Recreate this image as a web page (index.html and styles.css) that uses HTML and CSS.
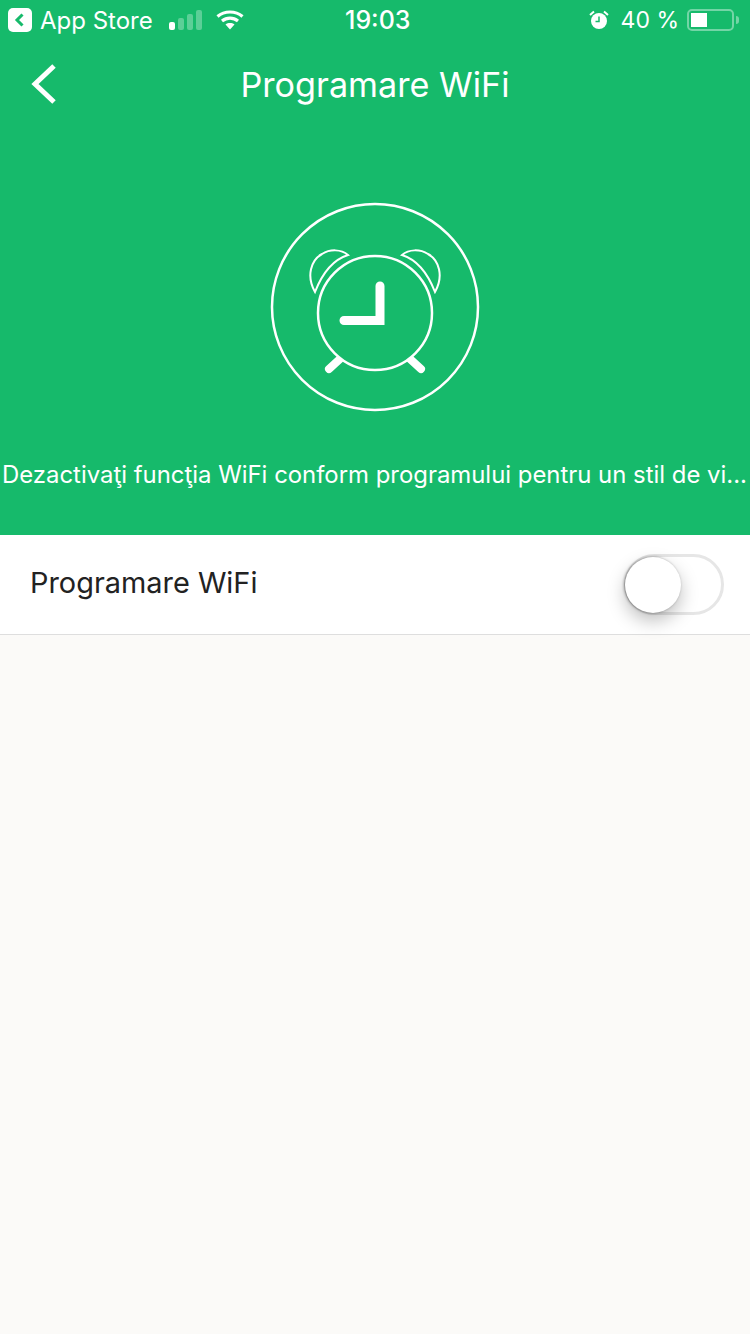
FILE: index.html
```html
<!DOCTYPE html>
<html>
<head>
  <title>Programare WiFi</title>
  <link rel="stylesheet" href="styles.css">
</head>
<body>
  <div class="header">
    <div class="status-bar">
      <div class="status-left">
        <svg class="app-back" width="24" height="24" viewBox="0 0 24 24">
          <rect width="24" height="24" rx="5" fill="#fff"/>
          <path d="M14.5 6.5 9 12l5.5 5.5" fill="none" stroke="#16BA6B" stroke-width="3"/>
        </svg>
        <span class="carrier">App Store</span>
        <div class="signal">
          <span class="bar bar-on"></span>
          <span class="bar bar-2"></span>
          <span class="bar bar-3"></span>
          <span class="bar bar-4"></span>
        </div>
        <svg class="wifi" width="28" height="20" viewBox="0 0 28 20">
          <path d="M1.5 6.5C8.5 .5 19.5 .5 26.5 6.5M6 11c4.8-3.9 11.200-3.900 16 0" fill="none" stroke="#fff" stroke-width="3.2"/>
          <path d="M9.5 14.5c2.700-1.900 6.300-1.900 9 0L14 19.500z" fill="#fff"/>
        </svg>
      </div>
      <div class="status-time">19:03</div>
      <div class="status-right">
        <svg class="alarm-small" width="20" height="20" viewBox="0 0 20 20">
          <circle cx="10" cy="11" r="8" fill="#fff"/>
          <path d="M10 6.5V11.5H6.5" fill="none" stroke="#16BA6B" stroke-width="1.5"/>
          <path d="M1 5 5 1.5M19 5 15 1.5" stroke="#fff" stroke-width="2"/>
        </svg>
        <span class="percent">40 %</span>
        <div class="battery"><div class="battery-level"></div></div>
        <div class="battery-nub"></div>
      </div>
    </div>

    <div class="nav">
      <svg class="nav-back" width="28" height="42" viewBox="0 0 28 42">
        <path d="M24 3 5 21l19 18" fill="none" stroke="#fff" stroke-width="5"/>
      </svg>
      <div class="nav-title">Programare WiFi</div>
    </div>

    <svg class="hero-icon" width="210" height="210" viewBox="0 0 210 210">
      <g fill="none" stroke="#fff">
        <circle cx="105" cy="105" r="103" stroke-width="2.5"/>
        <path d="M71 156 59 167M139 156 151 167" stroke-width="8" stroke-linecap="round"/>
        <circle cx="105" cy="111" r="57" fill="#16BA6B" stroke-width="2.5"/>
        <path d="M45 90C36 74 41 58 52 52C60 47 71 47 78 53C62 58 52 72 45 90Z" stroke-width="2"/>
        <path d="M165 90C174 74 169 58 158 52C150 47 139 47 132 53C148 58 158 72 165 90Z" stroke-width="2"/>
        <path d="M110 84V118.5H74" stroke-width="9" stroke-linecap="round"/>
      </g>
    </svg>

    <div class="hero-text">Dezactivaţi funcţia WiFi conform programului pentru un stil de vi...</div>
  </div>

  <div class="row">
    <span class="row-label">Programare WiFi</span>
    <div class="switch"><div class="knob"></div></div>
  </div>
</body>
</html>
```

FILE: styles.css
```css
body {
  margin: 0;
  height: 1334px;
  overflow: hidden;
  background: #FBFAF8;
  font-family: Inter, "Noto Sans", sans-serif;
  color: #222;
}

.header {
  height: 535px;
  background: #16BA6B;
  color: #fff;
}

.status-bar {
  height: 40px;
  display: grid;
  grid-template-columns: 337px auto 1fr;
  align-items: center;
  padding: 0 11px 0 8px;
}

.status-left,
.status-right {
  display: flex;
  align-items: center;
}

.status-right {
  justify-content: flex-end;
}

.carrier {
  font-size: 24px;
  margin-left: 8px;
}

.signal {
  display: flex;
  align-items: flex-end;
  gap: 3px;
  margin-left: 16px;
}

.bar {
  width: 6px;
  border-radius: 2px;
  background: rgba(255,255,255,0.3);
}

.bar-on { height: 8px; background: #fff; }
.bar-2 { height: 12px; }
.bar-3 { height: 16px; }
.bar-4 { height: 20px; }

.wifi {
  margin-left: 14px;
}

.status-time {
  font-size: 25px;
  font-weight: 500;
}

.percent {
  font-size: 23px;
  margin-left: 12px;
}

.battery {
  width: 47px;
  height: 22px;
  box-sizing: border-box;
  margin-left: 8px;
  padding: 2px;
  border: 2px solid rgba(255,255,255,0.4);
  border-radius: 5px;
}

.battery-level {
  width: 16px;
  height: 100%;
  background: #fff;
}

.battery-nub {
  width: 3px;
  height: 8px;
  margin-left: 2px;
  border-radius: 0 3px 3px 0;
  background: rgba(255,255,255,0.4);
}

.nav {
  height: 86px;
  position: relative;
  display: flex;
  align-items: center;
  justify-content: center;
}

.nav-back {
  position: absolute;
  left: 30px;
  top: 23px;
}

.nav-title {
  font-size: 34.2px;
  padding-top: 2px;
}

.hero-icon {
  display: block;
  margin: 76px auto 0;
}

.hero-text {
  margin-top: 48px;
  padding: 0 2px;
  font-size: 23.9px;
  white-space: nowrap;
}

.row {
  height: 99px;
  display: flex;
  align-items: center;
  justify-content: space-between;
  padding: 0 26px 0 30px;
  background: #fff;
  border-bottom: 1px solid #DEDEDE;
}

.row-label {
  font-size: 28.9px;
  margin-bottom: 4px;
}

.switch {
  width: 100px;
  height: 61px;
  box-sizing: border-box;
  border: 3px solid #E6E6E6;
  border-radius: 31px;
}

.knob {
  width: 56px;
  height: 56px;
  margin-left: -2px;
  border-radius: 50%;
  background: #fff;
  box-shadow: 0 8px 18px rgba(0,0,0,0.25), -1px 0 3px rgba(0,0,0,0.4);
}
```
